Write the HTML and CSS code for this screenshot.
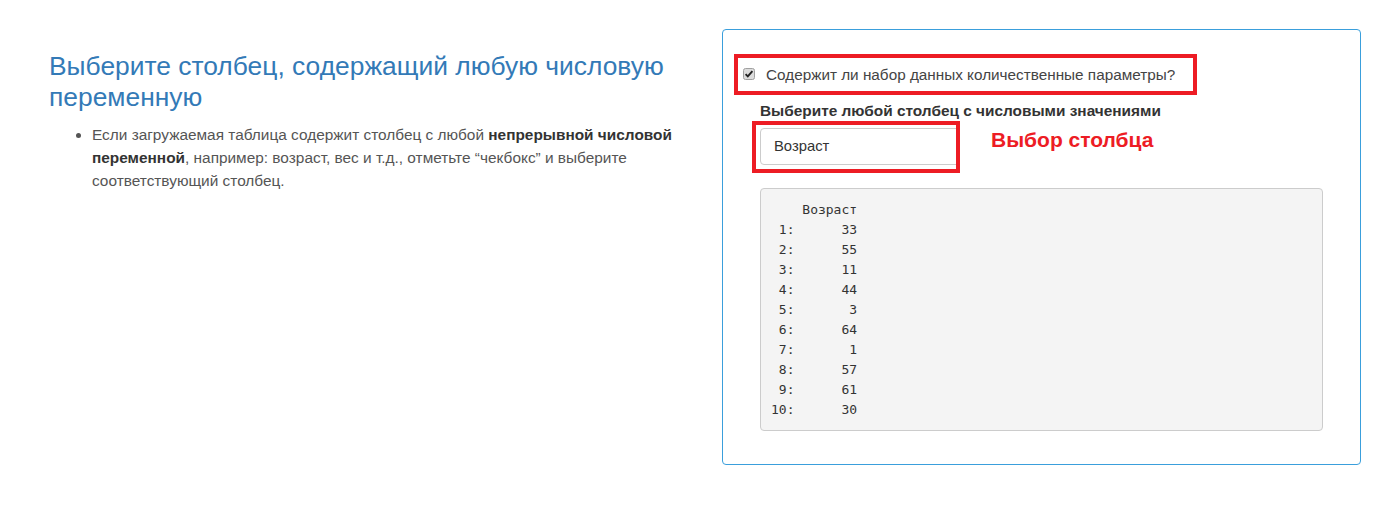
FILE: index.html
```html
<!DOCTYPE html>
<html lang="ru">
<head>
<meta charset="utf-8">
<title>Выбор столбца</title>
<link rel="stylesheet" href="styles.css">
</head>
<body>
<div class="page">
  <div class="left">
    <h3 class="title">Выберите столбец, содержащий любую числовую переменную</h3>
    <ul class="notes">
      <li>Если загружаемая таблица содержит столбец с любой <b>непрерывной числовой переменной</b>, например: возраст, вес и т.д., отметьте “чекбокс” и выберите соответствующий столбец.</li>
    </ul>
  </div>
  <div class="panel">
    <div class="mark-box check-row">
      <span class="check">
        <svg width="12" height="12" viewBox="0 0 12 12"><rect x="0.5" y="0.5" width="11" height="11" rx="2" fill="#dcdcdc" stroke="#a0a0a0"/><path d="M2.6 6.2 L4.8 8.4 L9.4 3.2" fill="none" stroke="#222" stroke-width="1.9"/></svg>
      </span>
      <span class="check-label">Содержит ли набор данных количественные параметры?</span>
    </div>
    <div class="field-label">Выберите любой столбец с числовыми значениями</div>
    <div class="select-row">
      <div class="mark-box select-box">
        <div class="select">Возраст</div>
      </div>
      <div class="callout">Выбор столбца</div>
    </div>
    <pre class="output">    Возраст
 1:      33
 2:      55
 3:      11
 4:      44
 5:       3
 6:      64
 7:       1
 8:      57
 9:      61
10:      30</pre>
  </div>
</div>
</body>
</html>
```
FILE: styles.css
```css
* { box-sizing: border-box; }
html, body { margin: 0; padding: 0; background: #fff; }
body { font-family: "Liberation Sans", Arial, sans-serif; font-size: 14px; line-height: 20px; color: #333; }

.page { display: flex; align-items: flex-start; padding-top: 29px; }

.left { flex: 0 0 722px; padding: 22px 30px 0 47px; }
.title { margin: 0 0 0 2px; font-size: 26.4px; line-height: 31px; font-weight: normal; color: #337ab7; }
.notes { margin: 10px 0 0; padding-left: 45px; color: #555; font-size: 15.4px; line-height: 23px; }
.notes b { color: #333; }

.panel { flex: 0 0 639px; border: 1px solid #3a9fdc; border-radius: 4px; padding: 24px 37px 33px 37px; }

.mark-box { border: 4px solid #ed1c24; }

.check-row { display: flex; align-items: center; width: 463px; height: 41px; margin-left: -26px; padding-left: 5px; }
.check { display: flex; width: 12px; height: 12px; margin-right: 11px; margin-top: -2px; }
.check-label { color: #444; font-size: 15.3px; }

.field-label { margin-top: 6px; font-weight: bold; color: #333; font-size: 15.4px; }

.select-row { display: flex; align-items: flex-start; }
.select-box { width: 208px; height: 52px; margin-left: -8px; padding: 3px 0 0 4px; overflow: hidden; }
.select { width: 230px; height: 37px; border: 1px solid #ccc; border-radius: 4px; padding: 0 13px; line-height: 35px; font-size: 14.8px; color: #333; background: #fff; }
.callout { margin: 7px 0 0 31px; font-size: 21px; line-height: 24px; font-weight: bold; color: #ed1c24; }

.output { margin: 15px 0 0; padding: 10.5px 10px; background: #f4f4f4; border: 1px solid #ccc; border-radius: 4px; font-family: "DejaVu Sans Mono", "Liberation Mono", monospace; font-size: 13px; line-height: 20px; color: #333; white-space: pre; }
```
